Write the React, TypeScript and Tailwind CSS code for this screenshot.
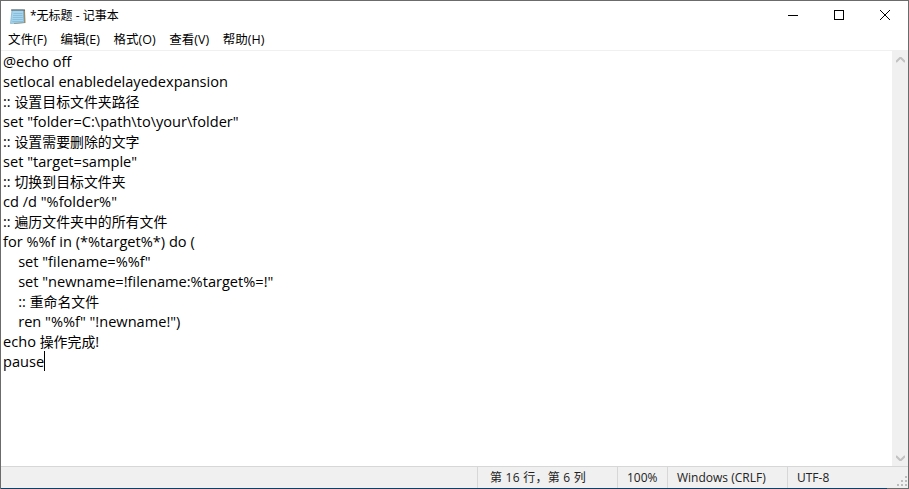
const font = { fontFamily: '"Open Sans", "Noto Sans CJK SC", sans-serif' }

const menus = ['文件(F)', '编辑(E)', '格式(O)', '查看(V)', '帮助(H)']

const lines = [
  '@echo off',
  'setlocal enabledelayedexpansion',
  ':: 设置目标文件夹路径',
  'set "folder=C:\\path\\to\\your\\folder"',
  ':: 设置需要删除的文字',
  'set "target=sample"',
  ':: 切换到目标文件夹',
  'cd /d "%folder%"',
  ':: 遍历文件夹中的所有文件',
  'for %%f in (*%target%*) do (',
  '    set "filename=%%f"',
  '    set "newname=!filename:%target%=!"',
  '    :: 重命名文件',
  '    ren "%%f" "!newname!")',
  'echo 操作完成!',
]

// chinese runs are a bit narrower than the latin text in the editor
function EditorLine({ text }: { text: string }) {
  return (
    <div className="h-[20px]">
      {text.split(/([\u4e00-\u9fff]+)/).map((part, index) =>
        index % 2 === 1 ? (
          <span key={index} className="text-[13.9px] leading-none">{part}</span>
        ) : (
          part
        )
      )}
    </div>
  )
}

function NotepadIcon() {
  return (
    <svg width="16" height="17" viewBox="0 0 16 17" className="shrink-0">
      <path d="M3 2 L15 2 L15.5 15 L4 16 Z" fill="#9c8a63" />
      <path d="M2 2 L13.5 2 L14 14.5 L0.5 15.5 Z" fill="#a6d4ec" stroke="#6fa3c2" strokeWidth="0.6" />
      <path d="M3.5 5.5 H12.5 M3 7.5 H12.5 M2.8 9.5 H12.8 M2.5 11.5 H12.8 M2.3 13.5 H13" stroke="#7db5d6" strokeWidth="0.7" />
      <path d="M2 1 V3 M4 1 V3 M6 1 V3 M8 1 V3 M10 1 V3 M12 1 V3 M14 1 V3" stroke="#4d5a60" strokeWidth="1" />
    </svg>
  )
}

function WindowButtons() {
  return (
    <div className="flex items-center self-start">
      <div className="w-[46px] h-[28px] flex items-center justify-center">
        <svg width="10" height="10" viewBox="0 0 10 10"><path d="M0 5.5 H10" stroke="#000" strokeWidth="1" /></svg>
      </div>
      <div className="w-[46px] h-[28px] flex items-center justify-center">
        <svg width="10" height="10" viewBox="0 0 10 10"><rect x="0.5" y="0.5" width="9" height="9" fill="none" stroke="#000" strokeWidth="1" /></svg>
      </div>
      <div className="w-[46px] h-[28px] flex items-center justify-center">
        <svg width="10" height="10" viewBox="0 0 10 10"><path d="M0 0 L10 10 M10 0 L0 10" stroke="#000" strokeWidth="1" /></svg>
      </div>
    </div>
  )
}

function ResizeGrip() {
  return (
    <svg width="10" height="10" viewBox="0 0 10 10" className="ml-auto self-end mb-[2px] mr-px">
      <path d="M8 0 h2 v2 h-2 Z M4 4 h2 v2 h-2 Z M8 4 h2 v2 h-2 Z M0 8 h2 v2 h-2 Z M4 8 h2 v2 h-2 Z M8 8 h2 v2 h-2 Z" fill="#bcbcbc" />
    </svg>
  )
}

export default function App() {
  return (
    <div style={font} className="w-[909px] h-[489px] flex flex-col bg-white text-black border-l border-r border-t border-[#6b6b6b] overflow-hidden">
      <div className="h-[30px] flex items-center justify-between shrink-0">
        <div className="flex items-center gap-[4px] pl-[9px] text-[12px]">
          <NotepadIcon />
          <span>*无标题 - 记事本</span>
        </div>
        <WindowButtons />
      </div>

      <div className="h-[19px] flex items-center pl-[7px] gap-[13.7px] text-[12.5px] shrink-0">
        {menus.map(menu => (
          <span key={menu}>{menu}</span>
        ))}
      </div>

      <div className="flex-1 flex min-h-0 border-t border-[#f0f0f0]">
        <div className="flex-1 pl-[2px] text-[14.6px] leading-[20px] text-black whitespace-pre">
          {lines.map(line => (
            <EditorLine key={line} text={line} />
          ))}
          <div className="flex items-center h-[20px]">
            pause
            <span className="w-px h-[20px] bg-black" />
          </div>
        </div>
        <div className="w-[16px] bg-[#f0f0f0] flex flex-col justify-between items-center pt-[6px] pb-[5px]">
          <svg width="9" height="6" viewBox="0 0 9 6"><path d="M0 5 L4.5 0.5 L9 5" fill="none" stroke="#c2c2c2" strokeWidth="2" /></svg>
          <svg width="9" height="6" viewBox="0 0 9 6"><path d="M0 1 L4.5 5.5 L9 1" fill="none" stroke="#c2c2c2" strokeWidth="2" /></svg>
        </div>
      </div>

      <div className="h-[22px] shrink-0 flex items-center bg-[#f0f0f0] border-t border-[#d7d7d7] text-[12px] text-[#222]">
        <div className="w-[476px] h-full" />
        <div className="w-[140px] h-full border-l border-[#d7d7d7] flex items-center pl-[12px] pt-[1px] tracking-[0.25px]">第 16 行，第 6 列</div>
        <div className="w-[50px] h-full border-l border-[#d7d7d7] flex items-center pl-[9px] pt-[1px]">100%</div>
        <div className="w-[120px] h-full border-l border-[#d7d7d7] flex items-center pl-[9px] pt-[1px]">Windows (CRLF)</div>
        <div className="flex-1 h-full border-l border-[#d7d7d7] flex items-center pl-[9px] pt-[1px]">
          UTF-8
          <ResizeGrip />
        </div>
      </div>
      <div className="h-px shrink-0 flex">
        <div className="flex-1 bg-[#123f63]" />
        <div className="w-[21px] bg-[#6b6b6b]" />
      </div>
    </div>
  )
}
